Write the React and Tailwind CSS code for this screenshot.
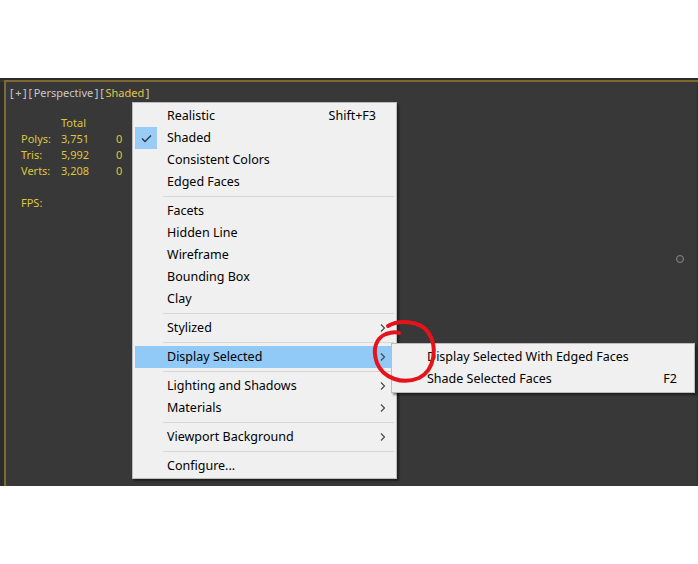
import React from "react";

const Chevron = () => (
  <svg width="6" height="9" viewBox="0 0 6 9" className="absolute right-[8px] top-1/2 -translate-y-1/2">
    <path d="M1 1 L4.5 4.5 L1 8" fill="none" stroke="#444" strokeWidth="1.1" />
  </svg>
);

const Sep = () => (
  <div className="h-[7px] flex items-center pl-[28px]">
    <div className="h-px w-full bg-[#d7d7d7]" />
  </div>
);

function Item({ label, shortcut, arrow, checked, active }) {
  return (
    <div className={"relative h-[22px] flex items-center pl-[32px] pr-[18px] " + (active ? "bg-[#91c9f7]" : "")}>
      {checked && (
        <div className="absolute left-0 top-0 h-[22px] w-[22px] bg-[#99ccf7] flex items-center justify-center">
          <svg width="11" height="9" viewBox="0 0 11 9">
            <path d="M1 4.5 L4 7.5 L10 1.5" fill="none" stroke="#333" strokeWidth="1.3" />
          </svg>
        </div>
      )}
      <span className="flex-1">{label}</span>
      {shortcut && <span>{shortcut}</span>}
      {arrow && <Chevron />}
    </div>
  );
}

export default function App() {
  return (
    <div className="w-[698px] h-[564px] bg-white overflow-hidden" style={{ fontFamily: '"Noto Sans", "Open Sans", sans-serif' }}>
      <div className="h-[78px]" />
      <div className="relative h-[408px] w-[698px] bg-[#383838] flex flex-col">
        <div className="h-[2px] bg-[#2b2b2b]" />
        <div className="h-[2px] bg-[#7d6a2e] ml-[4px]" />
        <div className="flex flex-1">
          <div className="w-[4px] bg-[#2b2b2b]" />
          <div className="w-[2px] bg-[#7d6a2e]" />
          <div className="flex-1 pl-[4px] pt-[3px] text-[11px] leading-[16px]">
            <div className="text-[#c8c8c8] flex gap-[2px]">
              <span>[<span className="mx-[1.5px]">+</span>]</span>
              <span>[<span className="mx-[1.5px]">Perspective</span>]</span>
              <span>[<span className="mx-[1.5px] text-[#e3c64a]">Shaded</span>]</span>
            </div>
            <div className="text-[#dcc63c] mt-[14px] grid grid-cols-[40px_55px_12px] ml-[11px]">
              <span />
              <span>Total</span>
              <span />
              <span>Polys:</span>
              <span>3,751</span>
              <span>0</span>
              <span>Tris:</span>
              <span>5,992</span>
              <span>0</span>
              <span>Verts:</span>
              <span>3,208</span>
              <span>0</span>
              <span className="mt-[16px]">FPS:</span>
            </div>
          </div>
          <div className="w-px bg-[#2e2e2e]" />
        </div>

        {/* small pivot circle */}
        <div className="absolute left-[676px] top-[177px] w-[8px] h-[8px] rounded-full border border-[#8a8a8a] bg-[#3d3d3d]" />

        {/* main menu */}
        <div className="absolute left-[132px] top-[24px] w-[265px] bg-[#f0f0f0] border border-[#bdbdbd] pt-[2px] px-[2px] pb-[1px] text-[12.5px] text-black shadow-[2px_2px_2px_rgba(0,0,0,0.45)]">
          <Item label="Realistic" shortcut="Shift+F3" />
          <Item label="Shaded" checked />
          <Item label="Consistent Colors" />
          <Item label="Edged Faces" />
          <Sep />
          <Item label="Facets" />
          <Item label="Hidden Line" />
          <Item label="Wireframe" />
          <Item label="Bounding Box" />
          <Item label="Clay" />
          <Sep />
          <Item label="Stylized" arrow />
          <Sep />
          <Item label="Display Selected" arrow active />
          <Sep />
          <Item label="Lighting and Shadows" arrow />
          <Item label="Materials" arrow />
          <Sep />
          <Item label="Viewport Background" arrow />
          <Sep />
          <Item label="Configure..." />
        </div>

        {/* submenu */}
        <div className="absolute left-[391px] top-[265px] w-[304px] bg-[#f0f0f0] border border-[#bdbdbd] p-[2px] text-[12.5px] text-black shadow-[2px_2px_2px_rgba(0,0,0,0.45)]">
          <div className="h-[22px] flex items-center pl-[33px] pr-[15px]">
            <span className="flex-1">Display Selected With Edged Faces</span>
          </div>
          <div className="h-[22px] flex items-center pl-[33px] pr-[15px]">
            <span className="flex-1">Shade Selected Faces</span>
            <span>F2</span>
          </div>
        </div>

        {/* red hand-drawn annotation */}
        <svg className="absolute left-0 top-0 pointer-events-none" width="698" height="408" viewBox="0 78 698 408">
          <path
            d="M388 326 C398 320 419 320 428 332 C438 346 435 370 419 378 C402 385 383 378 377 363 C372 349 376 338 386 334 C392 332 396 332 399 333"
            fill="none"
            stroke="#e5131b"
            strokeWidth="4"
            strokeLinecap="round"
          />
        </svg>
      </div>
    </div>
  );
}
